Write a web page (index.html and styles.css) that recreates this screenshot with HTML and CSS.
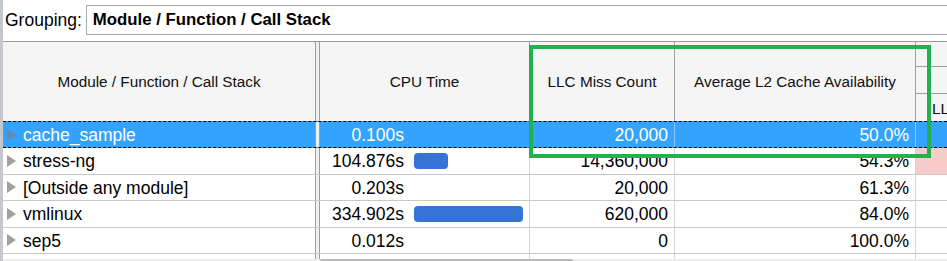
FILE: index.html
```html
<!DOCTYPE html>
<html>
<head>
    <title>Module / Function / Call Stack</title>
    <link rel="stylesheet" href="styles.css">
</head>
<body>
    <div class="app">
        <div class="toolbar">
            <span class="label">Grouping:</span>
            <div class="combo">Module / Function / Call Stack</div>
        </div>

        <div class="row head">
            <div class="cell name">Module / Function / Call Stack</div>
            <div class="split"></div>
            <div class="cell">CPU Time</div>
            <div class="cell">LLC Miss Count</div>
            <div class="cell">Average L2 Cache Availability</div>
            <div class="cell group">
                <div class="sub"></div>
                <div class="sub"></div>
                <div class="sub lbl">LLC Miss Count</div>
            </div>
        </div>

        <div class="row selected">
            <div class="cell name"><span class="arrow"></span>cache_sample</div>
            <div class="split"></div>
            <div class="cell cpu"><span class="num">0.100s</span><span></span></div>
            <div class="cell num-cell">20,000</div>
            <div class="cell num-cell">50.0%</div>
            <div class="cell extra"></div>
        </div>
        <div class="row">
            <div class="cell name"><span class="arrow"></span>stress-ng</div>
            <div class="split"></div>
            <div class="cell cpu"><span class="num">104.876s</span><span class="bar" style="width: 34px"></span></div>
            <div class="cell num-cell">14,360,000</div>
            <div class="cell num-cell">54.3%</div>
            <div class="cell extra warn"></div>
        </div>
        <div class="row">
            <div class="cell name"><span class="arrow"></span>[Outside any module]</div>
            <div class="split"></div>
            <div class="cell cpu"><span class="num">0.203s</span><span></span></div>
            <div class="cell num-cell">20,000</div>
            <div class="cell num-cell">61.3%</div>
            <div class="cell extra"></div>
        </div>
        <div class="row">
            <div class="cell name"><span class="arrow"></span>vmlinux</div>
            <div class="split"></div>
            <div class="cell cpu"><span class="num">334.902s</span><span class="bar" style="width: 109px"></span></div>
            <div class="cell num-cell">620,000</div>
            <div class="cell num-cell">84.0%</div>
            <div class="cell extra"></div>
        </div>
        <div class="row">
            <div class="cell name"><span class="arrow"></span>sep5</div>
            <div class="split"></div>
            <div class="cell cpu"><span class="num">0.012s</span><span></span></div>
            <div class="cell num-cell">0</div>
            <div class="cell num-cell">100.0%</div>
            <div class="cell extra"></div>
        </div>
        <div class="row filler">
            <div class="cell name"></div>
            <div class="split"></div>
            <div class="cell"></div>
            <div class="cell"></div>
            <div class="cell"></div>
            <div class="cell extra"></div>
        </div>

        <div class="scrollbar"><div class="thumb"></div></div>

        <!-- annotation box over the two cache columns -->
        <div class="highlight"></div>
    </div>
</body>
</html>
```

FILE: styles.css
```css
body {
    margin: 0;
    background: #fff;
    font-family: "Liberation Sans", Arial, sans-serif;
    color: #000;
}

.app {
    position: relative;
    height: 261px;
    overflow: hidden;
    display: flex;
    flex-direction: column;
    border-left: 3px solid #c4c7cb;
}

.toolbar {
    height: 41px;
    flex: none;
    display: flex;
    align-items: center;
    padding-left: 2px;
    box-sizing: border-box;
    padding-bottom: 1px;
}

.label {
    font-size: 17.5px;
}

.combo {
    flex: 1;
    height: 30px;
    margin-left: 4px;
    margin-right: -10px;
    border: 1px solid #a9a9a9;
    box-sizing: border-box;
    display: flex;
    align-items: center;
    padding-left: 6px;
    font-size: 16.8px;
    font-weight: bold;
}

.row {
    display: grid;
    grid-template-columns: 312px 5px 210px 145px 241px 1fr;
    height: 26.5px;
    box-sizing: border-box;
    border-bottom: 1px solid #c8c8c8;
    font-size: 17.5px;
    flex: none;
}

.cell {
    border-right: 1px solid #d4d4d4;
    display: flex;
    align-items: center;
    white-space: nowrap;
    overflow: hidden;
    padding-top: 2px;
    box-sizing: border-box;
}

.split {
    background: #f0f0f0;
    border-left: 1px solid #9c9c9c;
    border-right: 1px solid #9c9c9c;
}

.cell.name {
    border-right: none;
    padding-left: 4px;
}

.arrow {
    flex: none;
    width: 0;
    height: 0;
    border-left: 9px solid #a0a0a0;
    border-top: 6px solid transparent;
    border-bottom: 6px solid transparent;
    margin-right: 7px;
    margin-top: -2px;
}

.cpu {
    display: grid;
    grid-template-columns: 84px 1fr;
    column-gap: 10px;
    align-items: center;
}

.cpu .num {
    text-align: right;
}

.bar {
    display: block;
    height: 16px;
    margin-top: -2px;
    border-radius: 4px;
    background: #3574d4;
}

.num-cell {
    justify-content: flex-end;
    padding-right: 6px;
}

.cell.extra {
    border-right: none;
}

.warn {
    background: #f8cbcb;
}

/* header */
.row.head {
    height: 80px;
    border-top: 1px solid #9c9c9c;
    border-bottom: none;
    background: #f5f5f5;
    font-size: 15.3px;
    color: #111;
}

.head .cell {
    justify-content: center;
    border-right-color: #a0a0a0;
    padding-top: 0;
}

.head .cell.name {
    padding-left: 0;
}

.head .group {
    display: grid;
    grid-template-rows: 25px 27px 1fr;
    grid-template-columns: 100%;
    justify-content: stretch;
    align-items: stretch;
    border-right: none;
}

.head .sub {
    border-bottom: 1px solid #a0a0a0;
}

.head .sub.lbl {
    border-bottom: none;
    padding-left: 16px;
    padding-top: 3px;
    display: flex;
    align-items: center;
    overflow: hidden;
}

/* selected row */
.row.selected {
    height: 27px;
    background: #33a3fe;
    color: #fff;
    border-top: 1px dashed #000;
    border-bottom: 1px dashed #000;
}

.selected .cell {
    border-right-color: #8ec6f5;
}

.selected .arrow {
    border-left-color: #6689b0;
}

.row.filler {
    flex: 1;
    height: auto;
    border-bottom: none;
}

.scrollbar {
    height: 2px;
    flex: none;
    background: #ececec;
    position: relative;
}

.thumb {
    position: absolute;
    left: 317px;
    width: 253px;
    top: 0;
    bottom: 0;
    background: #b8b8b8;
    border-radius: 2px 2px 0 0;
}

.highlight {
    position: absolute;
    left: 526px;
    top: 45px;
    width: 402px;
    height: 113px;
    box-sizing: border-box;
    border: 4px solid #22b14c;
}
```
